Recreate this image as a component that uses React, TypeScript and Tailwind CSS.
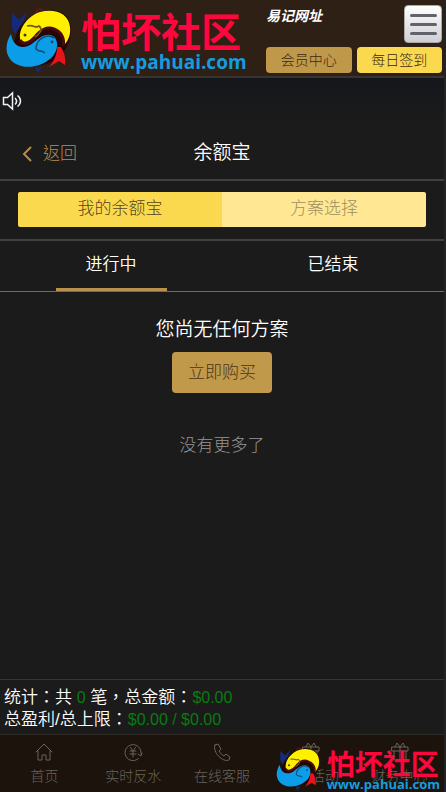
import type { ReactNode } from "react";

function FishLogo({ className }: { className: string }) {
  return (
    <svg viewBox="0 0 80 75" className={className} aria-hidden="true">
      <path d="M12 13l7 7 8-8-3 8-9 14-3-6z" fill="#152a7c" />
      <path d="M37 15c-1-4 0-7 3-6 3 1 4 0 5 4" fill="none" stroke="#8c1220" />
      <path d="M36 67l2 4 3-4" fill="none" stroke="#152a7c" strokeWidth="2" />
      <path
        d="M14 44C16 28 26 17 40 12c15-5 30 1 31 15 1 11-4 20-8 26-4 8-20 14-30 12-12-2-20-10-19-21z"
        fill="#240608"
      />
      <path
        d="M20 38c-1-10 8-22 20-26 14-4 29 1 30 15 1 8-2 14-6 18 0-9-5-17-14-17-12 0-17 14-26 14-3 0-4-2-4-4z"
        fill="#fff000"
      />
      <path
        d="M11 34C4 45 5 58 16 64c12 6 28 2 37-8 5-6 6-16 0-20-7-4-14 2-20 7-9 7-20 5-22-9z"
        fill="#0b9de8"
      />
      <path d="M20 40c3 6 10 3 15-3 5-7 12-11 19-8 8 3 11 11 9 17" fill="none" stroke="#4a0b10" strokeWidth="3" />
      <path d="M61 47c3 5 5 11 4 18l-6-4-10 6c5-6 8-12 8-20z" fill="#e8141c" />
      <path d="M27 26c7-2 8 3 12 0 4 3 1 8-4 11" fill="none" stroke="#6f5910" strokeWidth="1.6" />
      <path d="M54 38c-7-5-18 1-18 11 4 4 4 0 9 4" fill="none" stroke="#164b73" strokeWidth="1.6" />
      <circle cx="25" cy="35" r="1.5" fill="#433810" />
      <circle cx="52" cy="42" r="1.4" fill="#154b75" />
    </svg>
  );
}

function NavItem({ label, children }: { label: string; children: ReactNode }) {
  return (
    <a href="#" className="flex flex-1 flex-col items-center gap-1 pt-[7px] text-sm leading-5 text-[#6a645b]">
      <svg viewBox="0 0 20 20" className="size-5" fill="none" stroke="currentColor" strokeLinejoin="round" strokeLinecap="round">
        {children}
      </svg>
      <span className="whitespace-nowrap">{label}</span>
    </a>
  );
}

function GiftIcon() {
  return <path d="M2 5h16v4H2zM4 9v9h12V9M10 5v13M10 5L7 1 5 5M10 5l3-4 2 4" />;
}

function Header() {
  return (
    <header className="flex h-[78px] border-b-2 border-[#39342f] bg-[#2e2014]">
      <div className="flex">
        <FishLogo className="mr-px h-[75px] w-20 shrink-0" />
        <div className="pt-2.5 whitespace-nowrap">
          <div className="font-['Noto_Sans_CJK_SC',sans-serif] text-[40px] leading-10 font-bold text-[#ff063e]">怕坏社区</div>
          <div className="font-['Open_Sans',sans-serif] text-[19px] leading-6 font-bold text-[#159ce0]">www.pahuai.com</div>
        </div>
      </div>
      <div className="ml-auto flex w-[178px] shrink-0 flex-col justify-between pt-[5px] pr-0.5 pb-[3px]">
        <div className="flex justify-between">
          <span className="pt-[3px] text-sm leading-4 font-bold text-white italic">易记网址</span>
          <button
            aria-label="菜单"
            className="flex h-[38px] w-[38px] flex-col items-center justify-center gap-1.5 rounded border border-[#aaa] bg-linear-to-b from-white to-[#cfcfd4]"
          >
            <span className="h-[3px] w-[27px] rounded bg-[#62626b]" />
            <span className="h-[3px] w-[27px] rounded bg-[#62626b]" />
            <span className="h-[3px] w-[27px] rounded bg-[#62626b]" />
          </button>
        </div>
        <div className="flex gap-[5px] text-sm text-[#3b2812]">
          <button className="h-[26px] flex-1 rounded bg-[#bf9849]">会员中心</button>
          <button className="h-[26px] flex-1 rounded bg-[#fbd94f]">每日签到</button>
        </div>
      </div>
    </header>
  );
}

function App() {
  return (
    <div className="flex min-h-screen flex-col border-r-2 border-[#232323] bg-[#1b1b1b] font-['Liberation_Sans','Noto_Sans_CJK_TC',sans-serif] text-[17px] font-light text-white">
      <Header />
      <div className="flex h-[46px] items-center bg-linear-to-b from-[#14171b] to-[#1b1b1b] px-0.5">
        <svg viewBox="0 0 20 20" className="size-5" fill="none" stroke="#f2f2f2" strokeWidth="1.5">
          <path d="M1.5 6.5h4l5-4.5v16l-5-4.5h-4z" />
          <path d="M13 7c2 2 2 4.500 0 6.500M15.500 4.500c4 3 4 8 0 11" />
        </svg>
      </div>

      <div className="grid h-[57px] grid-cols-3 items-center border-b-2 border-[#414141] pt-1">
        <a href="#" className="flex items-center gap-[7px] pl-5 text-[#b58d4e]">
          <svg viewBox="0 0 16 20" className="h-5 w-4" fill="none" stroke="currentColor" strokeWidth="2">
            <path d="M11 3L4 10l7 7" />
          </svg>
          返回
        </a>
        <h1 className="text-center text-[19px] font-[350]">余额宝</h1>
      </div>

      <div className="border-b-2 border-[#414141] px-[18px] pt-[11px] pb-3">
        <div className="flex h-[35px] overflow-hidden rounded-xs">
          <button className="flex-1 bg-[#fbd94f] pb-0.5 text-[#57451c]">我的余额宝</button>
          <button className="flex-1 bg-[#ffe793] pb-0.5 text-[#9e905f]">方案选择</button>
        </div>
      </div>

      <div className="flex h-[51px] border-b border-[#6c6c6c] font-[350]">
        <div className="flex flex-1 justify-center">
          <button className="w-1/2 border-b-[3px] border-[#b9924f]">进行中</button>
        </div>
        <div className="flex flex-1 justify-center">
          <button className="w-1/2 border-b-[3px] border-transparent">已结束</button>
        </div>
      </div>

      <main className="flex flex-1 flex-col items-center pt-6">
        <p className="text-[19px] leading-7 font-[350]">您尚无任何方案</p>
        <button className="mt-2 h-[41px] rounded bg-[#c1994a] px-4 text-[#4b3516]">立即购买</button>
        <p className="mt-10 text-[#959595]">没有更多了</p>
      </main>

      <section className="h-[55px] border-t border-[#363636] px-1 pt-[7px] leading-[22px] font-[350]">
        <p>
          统计：共 <span className="text-[16px] text-[#087c10]">0</span> 笔，总金额：<span className="text-[16px] text-[#087c10]">$0.00</span>
        </p>
        <p>
          总盈利/总上限：<span className="text-[16px] text-[#087c10]">$0.00 / $0.00</span>
        </p>
      </section>

      <nav className="relative flex h-[58px] border-t border-[#302c25] bg-[#1b130c]">
        <NavItem label="首页">
          <path d="M2 10l8-8 8 8M4 9v9h4v-5h4v5h4V9" />
        </NavItem>
        <NavItem label="实时反水">
          <path d="M15.500 16.500a8 8 0 1 1 2.500-5M15 12l3 2 1-3M7.500 5.500L10 9l2.500-3.500M10 9v6M7 9h6M7 12h6" />
        </NavItem>
        <NavItem label="在线客服">
          <path d="M3 3l3-1 3 5-2 2c1 2 3 4 5 5l2-2 4 3-1 3c-6 3-17-8-14-15z" />
        </NavItem>
        <NavItem label="优惠活动">
          <GiftIcon />
        </NavItem>
        <NavItem label="财务中心">
          <GiftIcon />
        </NavItem>
        <div className="pointer-events-none absolute right-1 bottom-0 flex">
          <FishLogo className="h-[50px] w-14" />
          <div className="pt-2 whitespace-nowrap">
            <div className="font-['Noto_Sans_CJK_SC',sans-serif] text-[28px] leading-[26px] font-bold text-[#ff063e]">怕坏社区</div>
            <div className="font-['Open_Sans',sans-serif] text-[13px] leading-4 font-bold text-[#159ce0]">www.pahuai.com</div>
          </div>
        </div>
      </nav>
    </div>
  );
}

export default App;
